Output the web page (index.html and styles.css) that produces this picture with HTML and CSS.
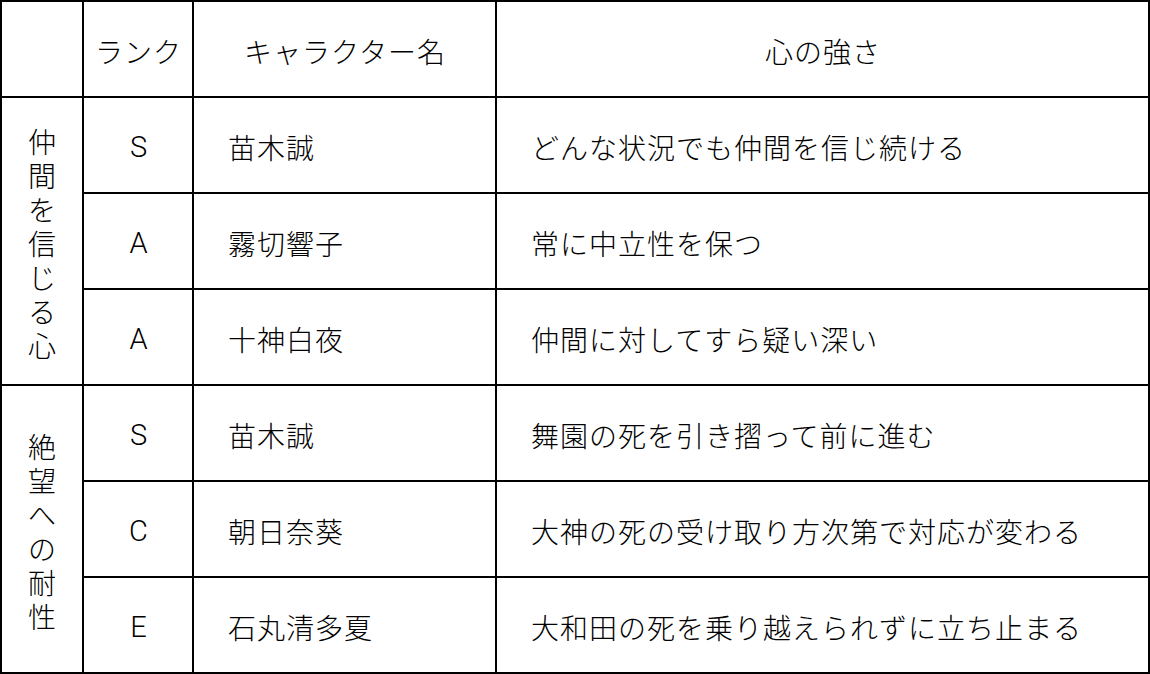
FILE: index.html
```html
<!DOCTYPE html>
<html lang="ja">
<head>
<meta charset="utf-8">
<title>心の強さ</title>
<link rel="stylesheet" href="styles.css">
</head>
<body>
<div class="table">
  <div class="cell head"></div>
  <div class="cell head center">ランク</div>
  <div class="cell head center">キャラクター名</div>
  <div class="cell head center">心の強さ</div>

  <div class="cell group g1"><span class="vtext">仲間を信じる心</span></div>
  <div class="cell center rank">S</div>
  <div class="cell left">苗木誠</div>
  <div class="cell left">どんな状況でも仲間を信じ続ける</div>

  <div class="cell center rank">A</div>
  <div class="cell left">霧切響子</div>
  <div class="cell left">常に中立性を保つ</div>

  <div class="cell center rank">A</div>
  <div class="cell left">十神白夜</div>
  <div class="cell left">仲間に対してすら疑い深い</div>

  <div class="cell group g2"><span class="vtext">絶望への耐性</span></div>
  <div class="cell center rank">S</div>
  <div class="cell left">苗木誠</div>
  <div class="cell left">舞園の死を引き摺って前に進む</div>

  <div class="cell center rank">C</div>
  <div class="cell left">朝日奈葵</div>
  <div class="cell left">大神の死の受け取り方次第で対応が変わる</div>

  <div class="cell center rank">E</div>
  <div class="cell left">石丸清多夏</div>
  <div class="cell left">大和田の死を乗り越えられずに立ち止まる</div>
</div>
</body>
</html>
```
FILE: styles.css
```css
html, body {
  margin: 0;
  padding: 0;
  background: #ffffff;
}

body {
  font-family: "Noto Sans CJK JP", "Noto Sans", sans-serif;
  font-size: 28px;
  font-weight: 300;
  color: #000000;
}

.table {
  display: grid;
  grid-template-columns: 80px 108px 301px 651px;
  grid-auto-rows: 94px;
  gap: 2px;
  padding: 2px;
  background: #000000;
  width: 1150px;
  box-sizing: border-box;
}

.cell {
  background: #ffffff;
  display: flex;
  align-items: center;
  line-height: 1;
  white-space: nowrap;
  letter-spacing: 1px;
  padding-top: 4px;
  box-sizing: border-box;
}

.center {
  justify-content: center;
  padding-left: 1px;
}

.left {
  justify-content: flex-start;
  padding-left: 34px;
}

.rank {
  font-family: "Roboto", "Liberation Sans", "Noto Sans CJK JP", sans-serif;
  font-weight: 300;
  font-size: 29px;
  letter-spacing: 0;
}

.group {
  grid-column: 1;
  grid-row: span 3;
  justify-content: center;
  padding-left: 0;
}

.g1 { grid-row: 2 / span 3; }
.g2 { grid-row: 5 / span 3; }

.vtext {
  display: block;
  width: 28px;
  white-space: normal;
  word-break: break-all;
  letter-spacing: 0;
  line-height: 34px;
  text-align: center;
}
```
